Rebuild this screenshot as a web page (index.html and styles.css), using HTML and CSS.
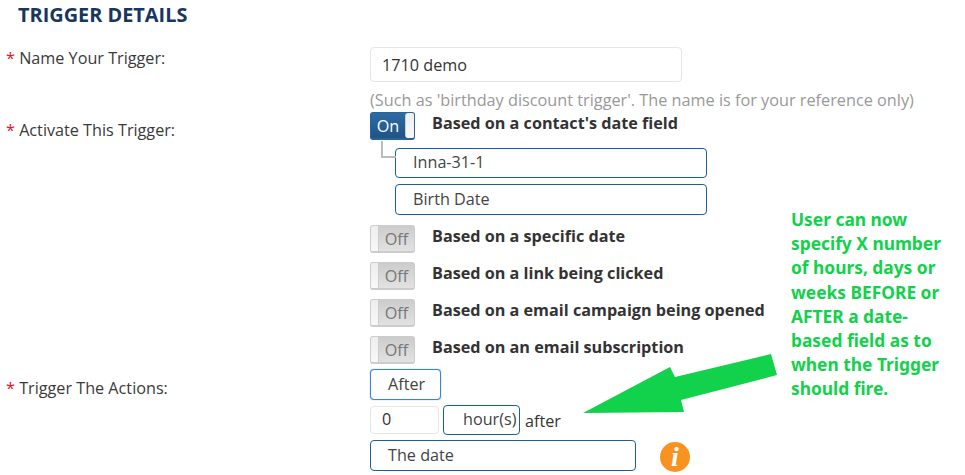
FILE: index.html
```html
<!doctype html>
<html lang="en">
 <head>
  <meta charset="UTF-8">
  <title>Trigger details</title>
  <link rel="stylesheet" href="styles.css">
 </head>
 <body>

	<h2 class="title">TRIGGER DETAILS</h2>

	<!-- form rows -->
	<div class="row row-name">
		<label class="lbl"><span class="req">*</span> Name Your Trigger:</label>
		<div class="fld">
			<div class="input input-name">1710 demo</div>
			<div class="help">(Such as 'birthday discount trigger'. The name is for your reference only)</div>
		</div>
	</div>

	<div class="row">
		<label class="lbl lbl-activate"><span class="req">*</span> Activate This Trigger:</label>
		<div class="fld">
			<div class="opt">
				<div class="toggle on"><span>On</span><i></i></div>
				<b class="opt-text">Based on a contact's date field</b>
			</div>
			<div class="sub">
				<div class="elbow"></div>
				<div class="select sel-wide">Inna-31-1</div>
				<div class="select sel-wide sel-second">Birth Date</div>
			</div>
			<div class="opt opt-off">
				<div class="toggle"><i></i><span>Off</span></div>
				<b class="opt-text">Based on a specific date</b>
			</div>
			<div class="opt opt-off">
				<div class="toggle"><i></i><span>Off</span></div>
				<b class="opt-text">Based on a link being clicked</b>
			</div>
			<div class="opt opt-off">
				<div class="toggle"><i></i><span>Off</span></div>
				<b class="opt-text">Based on a email campaign being opened</b>
			</div>
			<div class="opt opt-off">
				<div class="toggle"><i></i><span>Off</span></div>
				<b class="opt-text">Based on an email subscription</b>
			</div>
		</div>
	</div>

	<div class="row">
		<label class="lbl lbl-actions"><span class="req">*</span> Trigger The Actions:</label>
		<div class="fld">
			<div class="select sel-after">After</div>
			<div class="when">
				<div class="input input-num">0</div>
				<div class="select sel-hours">hour(s)</div>
				<span>after</span>
			</div>
			<div class="date-line">
				<div class="select sel-date">The date</div>
				<div class="info">i</div>
			</div>
		</div>
	</div>

	<!-- annotation over the form -->
	<div class="note">User can now specify X number of hours, days or weeks BEFORE or AFTER a date-based field as to when the Trigger should fire.</div>
	<svg class="arrow" width="965" height="475" viewBox="0 0 965 475">
		<polygon points="583,413 670,367 675,377 771,354 777,375 681,400 684,412" fill="#12d14b"/>
	</svg>

 </body>
</html>
```

FILE: styles.css
```css
body
{
	margin:0;
	width:965px;
	height:475px;
	overflow:hidden;
	background-color:white;
	font-family:"Open Sans", sans-serif;
	font-size:16.2px;
	color:#333;
	position:relative;
}

.title
{
	margin:0;
	padding:2px 0 0 18px;
	height:47px;
	box-sizing:border-box;
	font-size:19.9px;
	line-height:25px;
	font-weight:bold;
	color:#17375e;
}

.row
{
	display:flex;
}

.lbl
{
	width:370px;
	flex:none;
	box-sizing:border-box;
	padding:0 0 0 6px;
	line-height:22px;
	color:#3a3a3a;
}

.lbl-activate { padding-top:7px; }
.lbl-actions { padding-top:13px; }

.req
{
	color:#e8112d;
}

.input
{
	box-sizing:border-box;
	border:1px solid #e6e6e6;
	border-radius:4px;
	background-color:white;
}

.input-name
{
	width:312px;
	height:35px;
	padding-left:11px;
	line-height:34px;
}

.help
{
	margin-top:8px;
	height:22px;
	line-height:20px;
	font-size:16.26px;
	white-space:nowrap;
	color:#999;
}

.opt
{
	display:flex;
	height:28px;
}

.opt-off
{
	margin-top:9px;
}

.sub + .opt-off
{
	margin-top:10px;
}

.opt-text
{
	margin-left:17px;
	line-height:22px;
	color:#333;
}

.toggle
{
	width:45px;
	height:28px;
	box-sizing:border-box;
	display:flex;
	border:1px solid #ccc;
	border-bottom-width:2px;
	border-radius:3px;
	overflow:hidden;
	background:linear-gradient(#ccc, #e2e2e2);
	color:#777;
	line-height:27px;
}

.toggle span
{
	flex:1;
	text-align:center;
}

.toggle i
{
	width:7px;
	background:linear-gradient(#eee, #f8f8f8);
	border-right:1px solid #ccc;
}

.toggle.on
{
	border-color:#2a6496;
	background:linear-gradient(#2c6ba3, #1f5486);
	color:white;
}

.toggle.on i
{
	width:8px;
	border-right:none;
	border-left:1px solid #ccc;
	border-radius:3px 0 0 3px;
}

.sub
{
	position:relative;
	padding:8px 0 0 25px;
}

.elbow
{
	position:absolute;
	left:11px;
	top:1px;
	width:13px;
	height:15px;
	border-left:2px solid #bbb;
	border-bottom:2px solid #bbb;
}

.select
{
	box-sizing:border-box;
	border:1px solid #1a5f9e;
	border-radius:4px;
	background-color:white;
	color:#444;
}

.sel-wide
{
	width:312px;
	height:30px;
	padding-left:17px;
	line-height:26px;
}

.sel-second
{
	height:31px;
	margin-top:6px;
	line-height:28px;
}

.sel-after
{
	width:71px;
	height:31px;
	margin-top:5px;
	padding-left:17px;
	line-height:29px;
	border-color:#3b82e0;
	box-shadow:0 0 1px #3b82e0;
}

.when
{
	display:flex;
	align-items:center;
	margin-top:5px;
	height:30px;
}

.input-num
{
	width:69px;
	height:28px;
	padding-left:11px;
	line-height:24px;
}

.sel-hours
{
	width:77px;
	height:30px;
	margin-left:4px;
	padding-left:19px;
	line-height:26px;
}

.when span
{
	margin-left:5px;
	position:relative;
	top:1px;
}

.date-line
{
	display:flex;
	align-items:center;
	margin-top:4px;
}

.sel-date
{
	width:266px;
	height:31px;
	padding-left:17px;
	line-height:29px;
}

.info
{
	width:30px;
	height:30px;
	margin:3px 0 0 24px;
	border-radius:50%;
	background-color:#f7931e;
	color:white;
	text-align:center;
	font-family:"Liberation Serif", serif;
	font-style:italic;
	font-weight:bold;
	font-size:28px;
	line-height:30px;
}

/* annotation */
.note
{
	position:absolute;
	left:791px;
	top:207px;
	width:158px;
	font-family:"Noto Sans", sans-serif;
	font-size:17.35px;
	font-weight:bold;
	line-height:24.2px;
	color:#12d14b;
}

.arrow
{
	position:absolute;
	left:0;
	top:0;
	pointer-events:none;
}
```
